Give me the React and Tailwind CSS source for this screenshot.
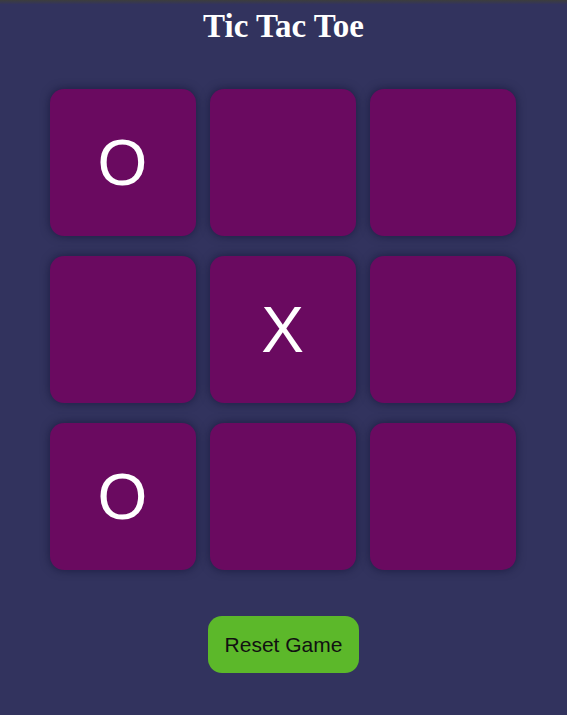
import { useState } from 'react';

const initial = ['O', '', '', '', 'X', '', 'O', '', ''];

export default function App() {
  const [board, setBoard] = useState(initial);

  return (
    <div className="min-h-[715px] bg-[#32335e] flex flex-col items-center">
      {/* top strip */}
      <div className="w-full h-[4px] bg-gradient-to-b from-[#3d3d3d] to-[#34345a]" />

      <h1
        className="mt-[3px] text-[33px] font-bold text-white leading-[38px]"
        style={{ fontFamily: '"Liberation Serif", "Times New Roman", serif' }}
      >
        Tic Tac Toe
      </h1>

      {/* Board */}
      <div className="mt-[44px] -ml-[2px] grid grid-cols-[146px_146px_146px] gap-x-[14px] gap-y-[20px]">
        {board.map((cell, i) => (
          <button
            key={i}
            className="h-[147px] rounded-[14px] bg-[#6a0a60] shadow-[0_0_10px_rgba(10,10,40,0.55)] flex items-center justify-center text-white text-[64px]"
            style={{ fontFamily: '"Liberation Sans", Arial, sans-serif' }}
          >
            {cell}
          </button>
        ))}
      </div>

      <button
        onClick={() => setBoard(Array(9).fill(''))}
        className="mt-[46px] w-[151px] h-[57px] rounded-[14px] bg-[#5cb82a] text-[#111] text-[21px]"
        style={{ fontFamily: '"Liberation Sans", Arial, sans-serif' }}
      >
        Reset Game
      </button>
    </div>
  );
}
